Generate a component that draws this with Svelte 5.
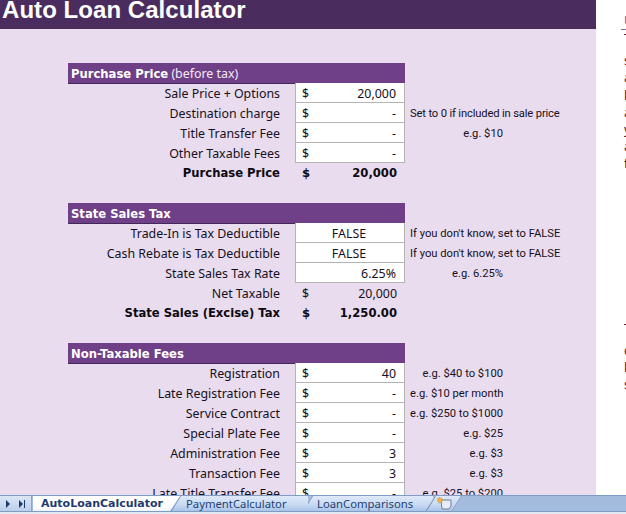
<script>
  const sections = [
    {
      title: 'Purchase Price',
      sub: ' (before tax)',
      rows: [
        { label: 'Sale Price + Options', cur: '$', value: '20,000', input: true },
        { label: 'Destination charge', cur: '$', value: '-', input: true, note: 'Set to 0 if included in sale price', left: true, tight: true },
        { label: 'Title Transfer Fee', cur: '$', value: '-', input: true, note: 'e.g. $10' },
        { label: 'Other Taxable Fees', cur: '$', value: '-', input: true },
        { label: 'Purchase Price', cur: '$', value: '20,000', total: true },
      ],
    },
    {
      title: 'State Sales Tax',
      rows: [
        { label: 'Trade-In is Tax Deductible', center: 'FALSE', input: true, note: "If you don't know, set to FALSE", left: true },
        { label: 'Cash Rebate is Tax Deductible', center: 'FALSE', input: true, note: "If you don't know, set to FALSE", left: true },
        { label: 'State Sales Tax Rate', value: '6.25%', input: true, note: 'e.g. 6.25%' },
        { label: 'Net Taxable', cur: '$', value: '20,000' },
        { label: 'State Sales (Excise) Tax', cur: '$', value: '1,250.00', total: true },
      ],
    },
    {
      title: 'Non-Taxable Fees',
      rows: [
        { label: 'Registration', cur: '$', value: '40', input: true, note: 'e.g. $40 to $100' },
        { label: 'Late Registration Fee', cur: '$', value: '-', input: true, note: 'e.g. $10 per month' },
        { label: 'Service Contract', cur: '$', value: '-', input: true, note: 'e.g. $250 to $1000' },
        { label: 'Special Plate Fee', cur: '$', value: '-', input: true, note: 'e.g. $25' },
        { label: 'Administration Fee', cur: '$', value: '3', input: true, note: 'e.g. $3' },
        { label: 'Transaction Fee', cur: '$', value: '3', input: true, note: 'e.g. $3' },
        { label: 'Late Title Transfer Fee', cur: '$', value: '-', input: true, note: 'e.g. $25 to $200' },
      ],
    },
  ];

  const sideTop = ['T', 's', 'a', 'l', 'a', 'y', 'a', 'f'];
  const sideBottom = ['T', 'c', 'l', 's'];
</script>

<div class="app">
  <div class="top">
    <div class="sheet">
      <h1>Auto Loan Calculator</h1>
      {#each sections as s}
        <section>
          <div class="head"><b>{s.title}</b>{s.sub || ''}</div>
          {#each s.rows as r}
            <div class="row" class:total={r.total}>
              <div class="label">{r.label}</div>
              <div class="cell" class:input={r.input}>
                {#if r.center}
                  <span class="center">{r.center}</span>
                {:else}
                  <span class="cur">{r.cur || ''}</span>
                  <span class="val">{r.value}</span>
                {/if}
              </div>
              {#if r.note}
                <div class="note" class:left={r.left} class:tight={r.tight}>{r.note}</div>
              {/if}
            </div>
          {/each}
        </section>
      {/each}
    </div>
    <div class="side">
      <div class="side-head">U</div>
      <div class="side-lines">
        {#each sideTop as t}<div>{t}</div>{/each}
      </div>
      <div class="side-lines lower">
        {#each sideBottom as t}<div>{t}</div>{/each}
      </div>
    </div>
  </div>

  <div class="tabbar">
    <div class="nav">
      <svg width="31" height="16" viewBox="0 0 31 16">
        <path d="M6 4l4 4-4 4z" fill="#1f3a66" />
        <path d="M19 4l4 4-4 4z" fill="#1f3a66" />
        <path d="M24 4h1v8h-1z" fill="#1f3a66" />
      </svg>
    </div>
    <div class="tab active">AutoLoanCalculator</div>
    <div class="tab payment"><svg class="edge" width="11" height="16"><path d="M0.5 16L10.5 0" /></svg>PaymentCalculator</div>
    <div class="tab loan"><svg class="edge" width="11" height="16"><path d="M0.5 16L10.5 0" /></svg>LoanComparisons</div>
    <div class="tab add">
      <svg class="edge" width="11" height="16"><path d="M0.5 16L10.5 0" /></svg>
      <svg class="sheet-icon" width="16" height="14" viewBox="0 0 16 14">
        <path d="M5 4h10v6l-2 3H6z" fill="#e6edf6" stroke="#6f7f95" />
        <path d="M3.5 1l1 1.500L6 2 5.500 3.500 7 4.500 5.500 5 6 7 4.500 6 3 7.500 3 5.500 1 5l1.500-1L1 2.500 3 2.500z" fill="#f2b83c" stroke="#d98a20" stroke-width="0.5" />
      </svg>
      <svg class="edge right" width="11" height="16"><path d="M0.5 16L10.5 0" /></svg>
    </div>
  </div>
</div>

<style>
  :global(body) {
    margin: 0;
    background: #fff;
  }

  .app {
    width: 626px;
    height: 514px;
    overflow: hidden;
    display: flex;
    flex-direction: column;
    font-family: "Noto Sans", sans-serif;
    font-size: 12.4px;
    color: #16101c;
  }

  .top {
    display: flex;
    height: 495px;
    overflow: hidden;
  }

  .sheet {
    width: 596px;
    flex: none;
    background: #e9dcef;
  }

  h1 {
    margin: 0 0 34px;
    height: 29px;
    background: #4a2d5e;
    color: #fff;
    font: bold 24px/20px "Liberation Sans", sans-serif;
    padding-left: 2px;
    letter-spacing: 0.05px;
    box-sizing: border-box;
  }

  section {
    margin-left: 68px;
    margin-bottom: 20px;
    width: 500px;
  }

  .head {
    width: 337px;
    height: 21px;
    margin-bottom: -1px;
    box-sizing: border-box;
    background: #6f4088;
    color: #f3eaf6;
    line-height: 21px;
    padding-left: 3px;
    border-bottom: 1px solid #42285a;
  }

  .head b {
    color: #fff;
    font-family: "DejaVu Sans", sans-serif;
    font-size: 11.6px;
  }

  .row {
    display: flex;
    height: 20px;
    line-height: 21px;
    white-space: nowrap;
  }

  .label {
    width: 212px;
    flex: none;
    text-align: right;
  }

  .cell {
    width: 110px;
    margin-left: 15px;
    flex: none;
    box-sizing: border-box;
    display: flex;
    justify-content: space-between;
    padding: 0 8px 0 7px;
  }

  .cell.input {
    background: #fff;
    border: 1px solid #b4b4b4;
    border-top: 0;
    padding-left: 6px;
  }

  .center {
    flex: 1;
    text-align: center;
  }

  .note {
    width: 93px;
    margin-left: 5px;
    flex: none;
    text-align: right;
    font-family: Roboto, sans-serif;
    font-size: 11.2px;
  }

  .note.left {
    width: 153px;
    text-align: left;
  }

  .note.tight {
    letter-spacing: -0.15px;
  }

  .total {
    font-family: "DejaVu Sans", sans-serif;
    font-weight: bold;
    font-size: 11.6px;
    color: #0c0a10;
  }

  .side {
    flex: 1;
    padding: 14px 0 0 28px;
    min-width: 0;
    overflow: hidden;
    color: #5a1020;
    font-size: 12px;
  }

  .side-head {
    border-bottom: 1px solid #8a6aa0;
    margin-left: -3px;
    padding-left: 3px;
    height: 15px;
    line-height: 14px;
    color: #8a5a90;
  }

  .side-lines {
    line-height: 17.2px;
  }

  .side-lines div:nth-child(2) {
    margin-top: 5px;
  }

  .side-lines.lower {
    margin-top: 147px;
  }

  .tabbar {
    height: 19px;
    display: flex;
    align-items: flex-start;
    background: linear-gradient(#a3bbdc 0, #a3bbdc 15px, #7f9cc4 15px, #7f9cc4 16px, #e3e9f2 16px);
    border-top: 1px solid #7f9cc4;
    box-sizing: border-box;
    color: #1f3f73;
  }

  .nav {
    width: 31px;
    height: 15px;
    background: linear-gradient(#dbe6f5, #bcd0ea);
    border-right: 1px solid #8aa3c6;
    flex: none;
  }

  .tab {
    height: 15px;
    line-height: 15px;
    box-sizing: border-box;
    flex: none;
    position: relative;
    background: linear-gradient(#dfeafa, #c6d9f2 60%, #a9c3e8);
    font-size: 11.3px;
    clip-path: polygon(0 100%, 10px 0, 100% 0, 100% 100%);
  }

  .tab.active {
    width: 147px;
    margin-left: 1px;
    padding-left: 8px;
    background: linear-gradient(#fff 70%, #eef3fa);
    font-family: "DejaVu Sans", sans-serif;
    font-weight: bold;
    font-size: 11px;
    color: #1f3a6e;
    z-index: 4;
    clip-path: polygon(0 0, 100% 0, calc(100% - 10px) 100%, 0 100%);
  }

  .tab.payment {
    width: 138px;
    margin-left: -10px;
    padding-left: 16px;
    z-index: 3;
  }

  .tab.loan {
    width: 131px;
    margin-left: -6px;
    padding-left: 15px;
    z-index: 2;
  }

  .tab.add {
    width: 37px;
    margin-left: -8px;
    z-index: 5;
    clip-path: polygon(0 100%, 10px 0, 100% 0, calc(100% - 10px) 100%);
  }

  .edge {
    position: absolute;
    left: 0;
    top: 0;
  }

  .edge.right {
    left: auto;
    right: 0;
  }

  .edge path {
    fill: none;
    stroke: #7f96bb;
    stroke-width: 1.2;
  }

  .sheet-icon {
    position: absolute;
    left: 11px;
    top: 0;
  }
</style>
